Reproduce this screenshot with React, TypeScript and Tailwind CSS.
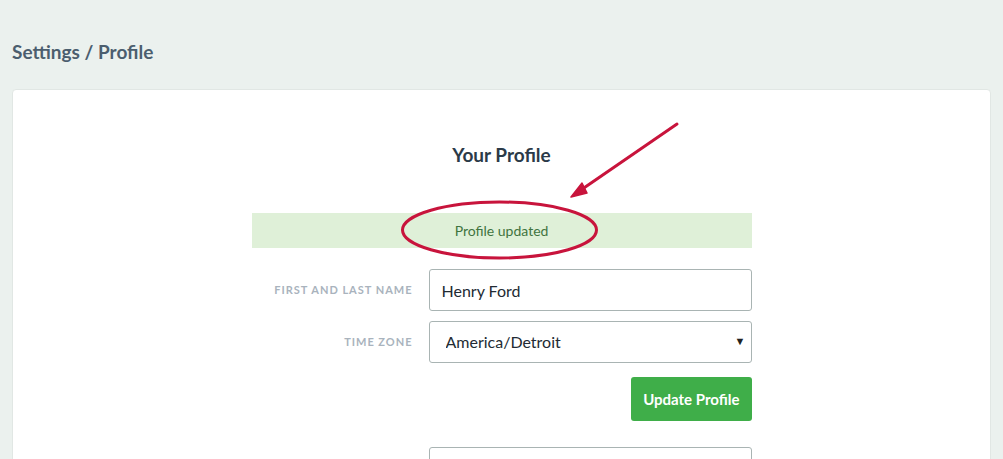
import { useState } from "react";

const labelCls =
  "text-right text-[11px] font-bold uppercase tracking-[0.09em] text-[#a9b3bd]";

const App = () => {
  const [name, setName] = useState("Henry Ford");
  const [zone, setZone] = useState("America/Detroit");

  return (
    <div className="min-h-screen bg-[#ebf1ee] px-3 pt-[38px] font-['Lato','Open_Sans',sans-serif]">
      <h1 className="mb-[23px] text-[19px] font-bold leading-7 text-[#4b5e6e]">Settings / Profile</h1>

      <div className="relative rounded-[4px] border border-[#e1e7e4] bg-white pt-[52px] pb-10">
        <h2 className="text-center text-[19px] font-bold leading-[26px] text-[#2b3a48]">Your Profile</h2>

        <div className="mx-auto mt-[45px] w-[500px]">
          {/* flash message */}
          <div className="flex h-[35px] items-center justify-center bg-[#dff0d8] text-[14px] text-[#3f7440]">
            Profile updated
          </div>

          <div className="mt-[21px] grid grid-cols-[161px_323px] items-center gap-x-4 gap-y-[10px]">
            <label className={labelCls}>First and last name</label>
            <input
              value={name}
              onChange={(e) => setName(e.target.value)}
              className="h-[42px] rounded-[3px] border border-[#a9b4b3] px-[12px] text-[16px] text-[#222b33] outline-none"
            />

            <label className={labelCls}>Time zone</label>
            <div className="relative">
              <select
                value={zone}
                onChange={(e) => setZone(e.target.value)}
                className="h-[42px] w-full appearance-none rounded-[3px] border border-[#a9b4b3] bg-white px-[16px] text-[16px] text-[#222b33] outline-none"
              >
                <option>America/Detroit</option>
                <option>America/Chicago</option>
                <option>America/New_York</option>
              </select>
              <span className="pointer-events-none absolute right-[6px] top-[12px] text-[11px] text-[#222]">▼</span>
            </div>

            <div />
            <div className="mt-[4px] flex justify-end">
              <button className="h-[44px] rounded-[3px] bg-[#3fae49] px-[12px] text-[15px] font-bold text-white">
                Update Profile
              </button>
            </div>

            <div />
            <input className="mt-[16px] h-[42px] rounded-[3px] border border-[#a9b4b3] px-[12px] text-[16px] outline-none" />
          </div>
        </div>

        {/* annotation overlay */}
        <svg className="pointer-events-none absolute left-0 top-0" width="979" height="200" viewBox="0 0 979 200">
          <g transform="translate(-13,-90)">
            <ellipse cx="499.5" cy="230" rx="97" ry="28" fill="none" stroke="#c8143c" strokeWidth="3" />
            <line x1="677" y1="124" x2="578" y2="192" stroke="#c8143c" strokeWidth="3" strokeLinecap="round" />
            <path d="M571 197 L582 183 L587 193 Z" fill="#c8143c" stroke="#c8143c" strokeWidth="1.5" strokeLinejoin="round" />
          </g>
        </svg>
      </div>
    </div>
  );
};

export default App;
